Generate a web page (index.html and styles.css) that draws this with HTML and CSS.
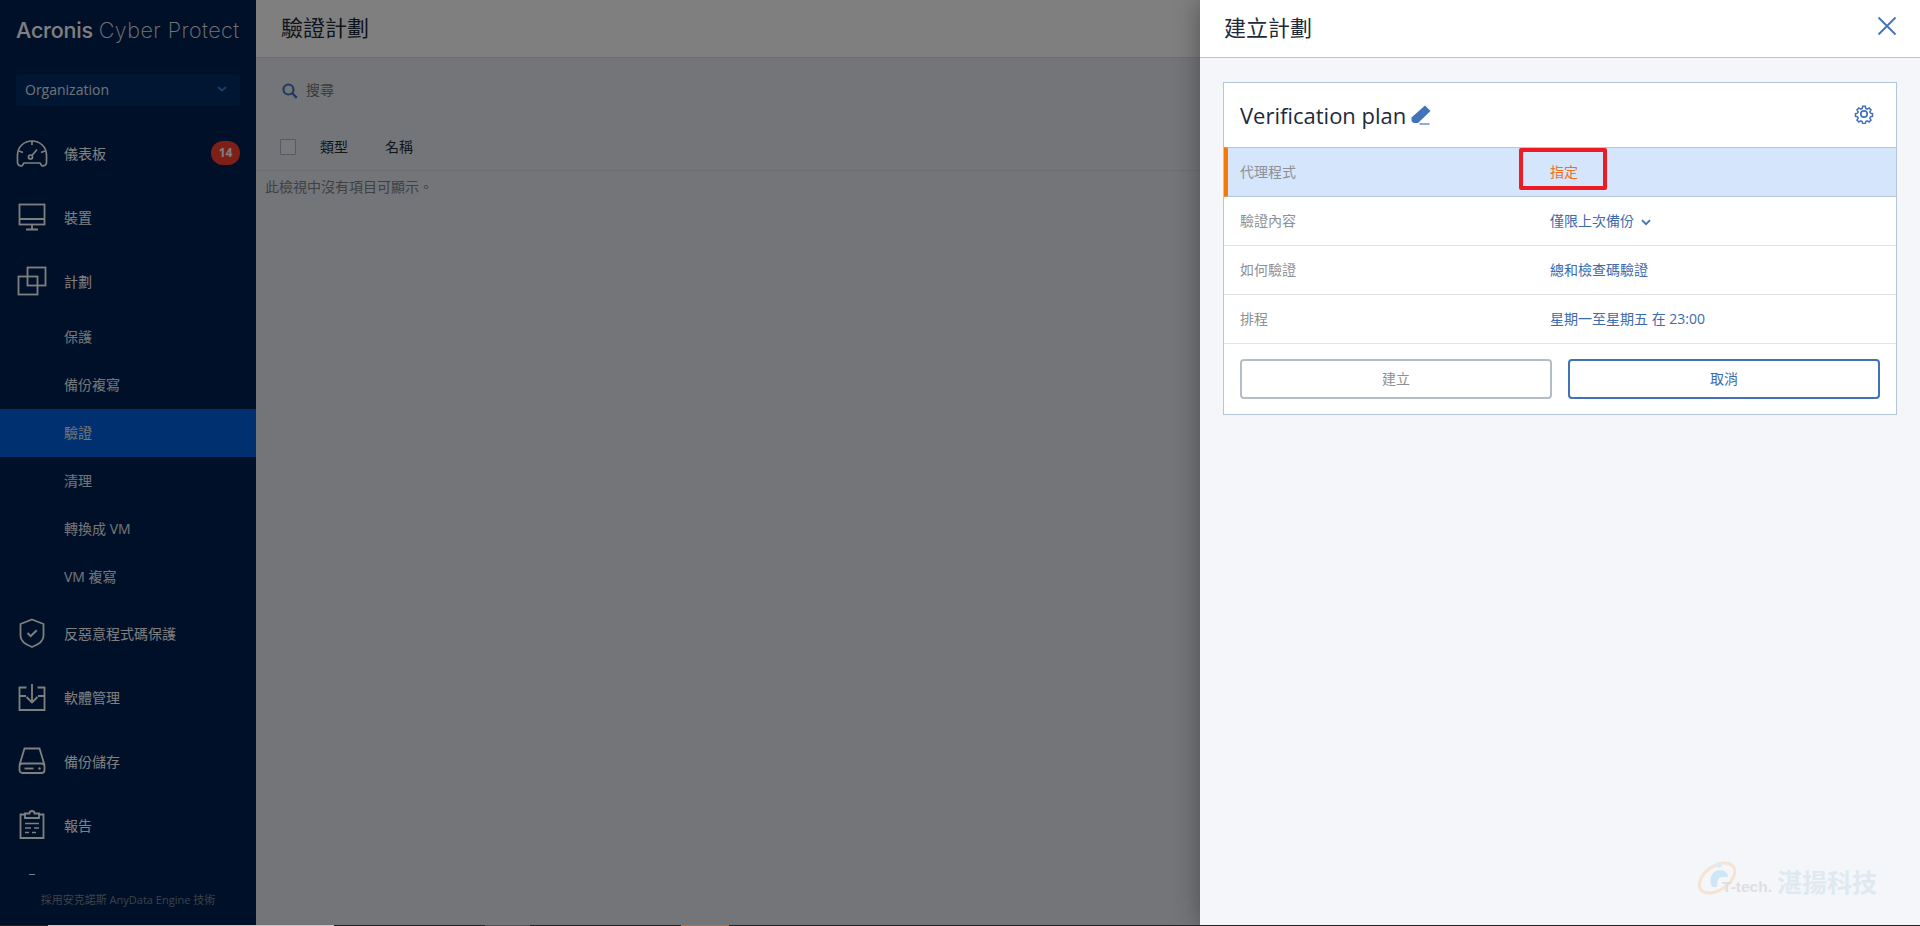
FILE: index.html
```html
<!DOCTYPE html>
<html lang="zh-Hant">
<head>
<meta charset="utf-8">
<title>Acronis Cyber Protect</title>
<link rel="stylesheet" href="styles.css">
</head>
<body>
<div class="app">
  <aside class="sidebar">
    <div class="logo"><span class="logo-a">Acronis</span> <span class="logo-b">Cyber Protect</span></div>
    <div class="org"><span>Organization</span>
      <svg class="org-chev" width="10" height="6" viewBox="0 0 10 6"><path d="M1 1l4 3.500L9 1" fill="none" stroke="#3a7ad8" stroke-width="1.800"/></svg>
    </div>
    <nav class="nav">
      <a class="item">
        <svg class="ico" width="32" height="32" viewBox="0 0 32 32"><g fill="none" stroke="#fff" stroke-width="1.700"><path d="M6 29H5a3.500 3.500 0 0 1-3.500-3.500V18C1.500 10 8 4 16 4s14.500 6 14.500 14v7.500a3.500 3.500 0 0 1-3.500 3.500h-1l-2-3H8z"/><path d="M16 4v4M3 14l4 1.500M29 14l-4 1.500"/><circle cx="14.500" cy="20" r="2"/><path d="M16 18.500l5-6"/></g></svg>
        <span>儀表板</span><b class="badge">14</b>
      </a>
      <a class="item">
        <svg class="ico" width="32" height="32" viewBox="0 0 32 32"><g fill="none" stroke="#fff" stroke-width="1.800"><rect x="3.500" y="3.500" width="25" height="20"/><path d="M3.500 18h25M16 24v4M10 28.500h12"/></g></svg>
        <span>裝置</span>
      </a>
      <a class="item">
        <svg class="ico" width="32" height="32" viewBox="0 0 32 32"><g fill="none" stroke="#fff" stroke-width="1.800"><rect x="2.500" y="11.500" width="19" height="18"/><rect x="11.500" y="2.500" width="18" height="18"/></g></svg>
        <span>計劃</span>
      </a>
      <div class="subs">
        <a class="sub">保護</a>
        <a class="sub">備份複寫</a>
        <a class="sub active">驗證</a>
        <a class="sub">清理</a>
        <a class="sub">轉換成 VM</a>
        <a class="sub">VM 複寫</a>
      </div>
      <a class="item">
        <svg class="ico" width="32" height="32" viewBox="0 0 32 32"><g fill="none" stroke="#fff" stroke-width="1.800"><path d="M16 2.500l11.500 4.500v12c0 4.500-5 8.500-11.500 11-6.500-2.500-11.500-6.500-11.500-11V7z"/><path d="M11.500 16l3.200 3.200 6-6" stroke-width="2"/></g></svg>
        <span>反惡意程式碼保護</span>
      </a>
      <a class="item">
        <svg class="ico" width="32" height="32" viewBox="0 0 32 32"><g fill="none" stroke="#fff" stroke-width="1.800"><path d="M10.500 6.500H3.500V29h25V6.500h-7"/><path d="M3.500 15h6.500M22 15h6.500M16 3v18M10.500 16l5.500 5.500 5.500-5.500"/></g></svg>
        <span>軟體管理</span>
      </a>
      <a class="item">
        <svg class="ico" width="32" height="32" viewBox="0 0 32 32"><g fill="none" stroke="#fff" stroke-width="1.800"><path d="M3.500 20L8.500 3.500h15L28.500 20"/><rect x="3.500" y="18.500" width="25" height="9.500" rx="3"/><path d="M8.500 23.500h9"/></g><circle cx="23.500" cy="23.500" r="1.200" fill="#fff"/></svg>
        <span>備份儲存</span>
      </a>
      <a class="item">
        <svg class="ico" width="32" height="32" viewBox="0 0 32 32"><g fill="none" stroke="#fff" stroke-width="1.800"><path d="M9 5.500H4.500V29h23V5.500H23"/><path d="M9 9V4.500h4.500a2.500 2.500 0 0 1 5 0H23V9z"/><path d="M9 14.500h14M9 19h6M18 19h5M9 23.500h4M16 23.500h4" stroke-width="1.600"/></g></svg>
        <span>報告</span>
      </a>
    </nav>
    <div class="dash"></div>
    <div class="foot">採用安克諾斯 AnyData Engine 技術</div>
  </aside>

  <main class="main">
    <header class="main-head">驗證計劃</header>
    <div class="search">
      <svg width="16" height="16" viewBox="0 0 16 16"><circle cx="6.500" cy="6.500" r="5" fill="none" stroke="#4272b8" stroke-width="2.200"/><path d="M10 10l4.800 4.800" stroke="#4272b8" stroke-width="2.400"/></svg>
      <span class="search-text">搜尋</span>
    </div>
    <div class="thead">
      <i class="check"></i>
      <span class="th-type">類型</span>
      <span class="th-name">名稱</span>
    </div>
    <div class="empty">此檢視中沒有項目可顯示。</div>
  </main>

  <div class="scrim"></div>

  <section class="panel">
    <header class="panel-head">
      <span>建立計劃</span>
      <svg class="close" width="20" height="20" viewBox="0 0 20 20"><path d="M1.500 1.500l17 17M18.500 1.500l-17 17" stroke="#4272b8" stroke-width="1.800" fill="none"/></svg>
    </header>
    <div class="panel-body">
      <div class="card">
        <div class="card-title">
          <span class="plan">Verification plan</span>
          <svg class="pencil" width="20" height="20" viewBox="0 0 20 20"><path d="M14 .5L19.500 6 7 18H2.500L.5 16v-3.500z" fill="#4272b8"/><path d="M8.500 19h10" stroke="#4272b8" stroke-width="1.200"/></svg>
          <svg class="gear" width="20" height="20" viewBox="0 0 20 20"><g fill="none" stroke="#4272b8" stroke-width="1.700"><path d="M8.500 1.500h3l.5 2.400 1.600.7 2.100-1.300 2.100 2.100-1.300 2.100.7 1.600 2.300.5v3l-2.300.5-.7 1.600 1.300 2.100-2.100 2.100-2.100-1.300-1.600.7-.5 2.300h-3l-.5-2.300-1.600-.7-2.100 1.300-2.100-2.100 1.300-2.100-.7-1.600-2.300-.5v-3l2.300-.5.7-1.600-1.300-2.100 2.100-2.100 2.100 1.300 1.600-.7z" transform="translate(1 1) scale(.9)"/><circle cx="10" cy="10" r="3.200"/></g></svg>
        </div>
        <div class="row row-alert">
          <span class="label">代理程式</span>
          <span class="value orange">指定<i class="mark"></i></span>
        </div>
        <div class="row">
          <span class="label">驗證內容</span>
          <span class="value">僅限上次備份<svg class="chev" width="10" height="7" viewBox="0 0 10 7"><path d="M1 1.200l4 4 4-4" fill="none" stroke="#4272b8" stroke-width="1.800"/></svg></span>
        </div>
        <div class="row">
          <span class="label">如何驗證</span>
          <span class="value">總和檢查碼驗證</span>
        </div>
        <div class="row">
          <span class="label">排程</span>
          <span class="value">星期一至星期五 在 23:00</span>
        </div>
        <div class="actions">
          <button class="btn btn-off">建立</button>
          <button class="btn btn-on">取消</button>
        </div>
      </div>
    </div>
    <div class="watermark">
      <svg width="44" height="38" viewBox="0 0 44 38"><ellipse cx="19" cy="19" rx="20" ry="12" transform="rotate(-35 19 19)" fill="none" stroke="#f7e3d3" stroke-width="3"/><path d="M14 28c-4-8 0-17 8-17 6 0 8 4 8 7h-6c-4 0-5 4-5 10z" fill="#cfe6f5"/><circle cx="21" cy="6" r="3" fill="#dcecf6"/></svg>
      <span class="wm-t">T-tech.</span>
      <span class="wm-c">湛揚科技</span>
    </div>
  </section>
</div>
<div class="strip"><i class="seg seg-a"></i><i class="seg seg-b"></i><i class="seg seg-c"></i><i class="seg seg-d"></i></div>
</body>
</html>
```
FILE: styles.css
```css
* { box-sizing: border-box; }
html, body { margin: 0; height: 100%; overflow: hidden; }
body { font-family: "Open Sans", "Noto Sans CJK TC", sans-serif; font-size: 14px; color: #1e2a3a; }
.app { position: relative; display: flex; width: 100%; height: 925px; overflow: hidden; }

.strip { display: flex; height: 1px; background: #222; }
.seg { display: block; height: 1px; }
.seg-a { width: 286px; margin-left: 48px; background: #c4c4c4; }
.seg-b { width: 45px; margin-left: 151px; background: #555; }
.seg-c { width: 48px; margin-left: 151px; background: #b07040; }
.seg-d { flex: 1; }

.sidebar { position: relative; display: flex; flex-direction: column; width: 256px; flex: none; background: #002050; color: #fff; padding-top: 18px; overflow: hidden; }
.logo { padding-left: 16px; height: 24px; line-height: 24px; font-family: Inter, sans-serif; font-size: 21.500px; white-space: nowrap; color: #fff; letter-spacing: -.2px; }
.logo-a { font-weight: 500; }
.logo-b { font-weight: 200; color: #e8e8e8; letter-spacing: .5px; }
.org { display: flex; align-items: center; justify-content: space-between; margin: 32px 16px 0; height: 32px; padding: 0 13px 2px 9px; background: #002c66; border-radius: 3px; font-size: 14px; color: #dfe6ee; }
.nav { display: flex; flex-direction: column; margin-top: 15px; }
.item { display: flex; align-items: center; height: 64px; padding: 0 16px; font-size: 14px; color: #fff; }
.ico { flex: none; margin-right: 16px; }
.item span { flex: 1; }
.badge { width: 29px; height: 24px; line-height: 24px; text-align: center; border-radius: 12px; background: #ff4030; font-size: 12px; font-weight: 700; color: #fff; }
.subs { display: flex; flex-direction: column; }
.sub { height: 48px; line-height: 48px; padding-left: 64px; font-size: 14px; color: #e6ebf2; }
.sub.active { background: #0060e0; }
.dash { width: 6px; height: 1px; margin: 17px 0 0 29px; background: #fff; }
.foot { margin-top: 17px; text-align: center; font-size: 11px; line-height: 16px; color: #7a8496; white-space: nowrap; }

.main { flex: 1; background: #e9ebf0; }
.main-head { height: 58px; line-height: 54px; padding-left: 25px; background: #fff; border-bottom: 1px solid #d8dde6; font-size: 22px; }
.search { display: flex; align-items: center; gap: 8px; height: 65px; padding-left: 26px; color: #777; }
.search-text { line-height: 18px; margin-bottom: 2px; }
.thead { display: flex; align-items: center; height: 48px; padding: 0 0 2px 24px; border-bottom: 1px solid #d8dde6; }
.check { width: 16px; height: 16px; border: 1px solid #a5b5cc; background: #f2f3f6; border-radius: 1px; margin: 2px 24px 0 0; }
.th-type { margin-right: 37px; }
.empty { padding: 7px 0 0 9px; line-height: 18px; color: #7d8088; }

.scrim { position: absolute; left: 0; top: 0; width: 1200px; height: 100%; background: rgba(0,0,0,.5); }

.panel { position: absolute; left: 1200px; top: 0; right: 0; bottom: 0; background: #f4f6f9; box-shadow: 0 0 24px rgba(0,0,0,.35); }
.panel-head { display: flex; align-items: center; justify-content: space-between; height: 58px; padding: 0 23px 3px 24px; background: #fff; border-bottom: 1px solid #b3c4dc; font-size: 22px; line-height: 54px; }
.close { margin-top: -2px; }
.panel-body { padding: 24px 23px 0 23px; }
.card { background: #fff; border: 1px solid #b3c6e0; }
.card-title { display: flex; align-items: center; height: 64px; padding: 0 22px 0 16px; }
.plan { font-size: 22px; color: #1e2a3a; }
.pencil { margin: -1px 0 0 5px; }
.gear { margin: -2px 0 0 auto; }
.row { position: relative; display: flex; align-items: center; height: 49px; padding: 0 0 2px 16px; border-top: 1px solid #e0e4e9; }
.row-alert { background: #d5e5fc; border-top-color: #b3c6e0; border-bottom: 1px solid #b3c6e0; border-left: 4px solid #f47b00; padding-left: 12px; height: 50px; margin-bottom: -1px; }
.row-alert + .row { border-top: 0; }
.label { width: 310px; flex: none; color: #8d9096; }
.value { position: relative; color: #3c6aae; }
.orange { color: #f26f1c; }
.mark { position: absolute; left: -31px; top: -13px; width: 88px; height: 42px; border: 4px solid #ed1c24; border-radius: 2px; }
.chev { margin-left: 7px; }
.actions { display: flex; gap: 16px; padding: 15px 16px 15px; border-top: 1px solid #e0e4e9; }
.btn { flex: 1; height: 40px; padding: 0 0 2px; background: #fff; border-radius: 4px; font: inherit; }
.btn-off { border: 2px solid #b4bdc7; color: #8d9096; }
.btn-on { border: 2px solid #4272b8; color: #3c6aae; }

.watermark { position: absolute; right: 43px; bottom: 28px; display: flex; align-items: flex-end; }
.wm-t { margin-left: -20px; font-family: "Liberation Sans", sans-serif; font-weight: 700; font-size: 15.500px; line-height: 20px; color: #dedfe1; }
.wm-c { margin: 0 0 2px 5px; font-size: 25px; line-height: 26px; font-weight: 700; color: #dfe9f2; }
```
